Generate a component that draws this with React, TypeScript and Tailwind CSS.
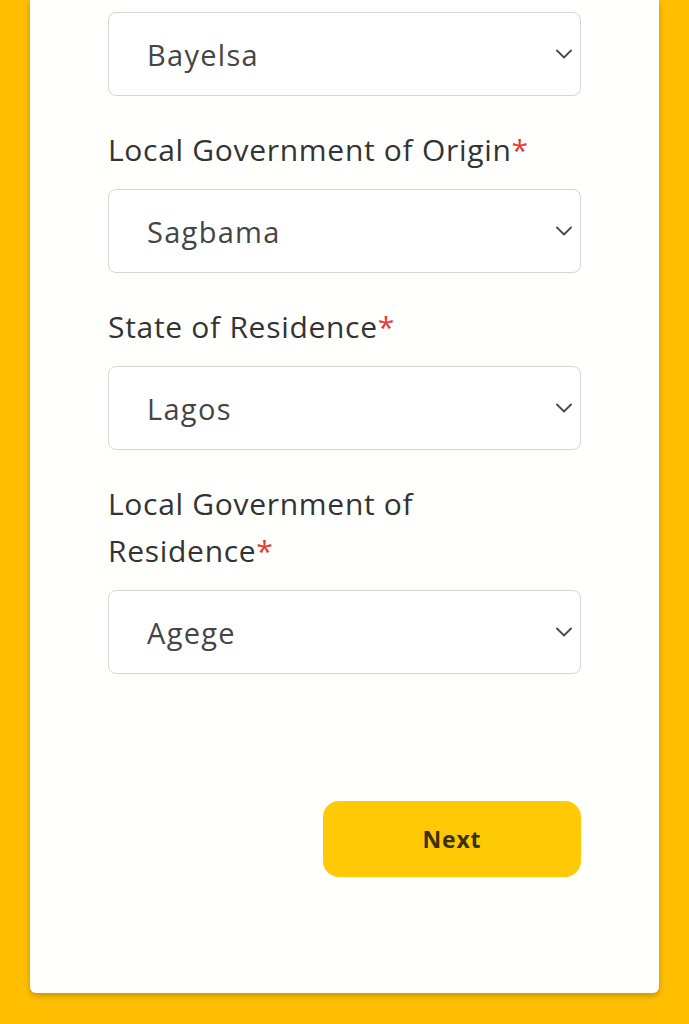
const fields = [
  { label: 'Local Government of Origin', value: 'Sagbama' },
  { label: 'State of Residence', value: 'Lagos' },
  { label: 'Local Government of Residence', value: 'Agege' },
];

function SelectBox({ value }: { value: string }) {
  return (
    <div className="flex h-[84px] items-center justify-between rounded-[8px] border-[1.5px] border-[#d6d6d6] bg-white pl-[38px] pr-[8px]">
      <span className="text-[29px] font-medium leading-none tracking-[1.3px] text-[#454545]">{value}</span>
      <svg width="16" height="10" viewBox="0 0 16 10" fill="none" className="text-[#4a4a4a]">
        <path d="M1 1.5l7 7 7-7" stroke="currentColor" strokeWidth="1.8" strokeLinecap="round" strokeLinejoin="round" />
      </svg>
    </div>
  );
}

export default function App() {
  return (
    <div
      className="min-h-screen bg-[#FFBF00] px-[30px] pb-[30px]"
      style={{ fontFamily: '"Open Sans", "Noto Sans", sans-serif' }}
    >
      <div className="rounded-b-[6px] bg-[#fffffd] px-[78px] pb-[116px] pt-[12px] shadow-[0_3px_6px_rgba(0,0,0,0.22)]">
        {/* State of origin (label scrolled away) */}
        <SelectBox value="Bayelsa" />

        {fields.map((field) => (
          <div key={field.label}>
            <label className="mb-[16px] mt-[30px] block text-[30px] leading-[47px] tracking-[0.7px] text-[#333333]">
              {field.label}
              <span className="text-[#e53935]">*</span>
            </label>
            <SelectBox value={field.value} />
          </div>
        ))}

        <div className="mt-[127px] flex justify-end">
          <button className="h-[76px] w-[258px] rounded-[16px] bg-[#FFCA05] text-[23px] font-bold tracking-[0.8px] text-[#3a3000]">
            Next
          </button>
        </div>
      </div>
    </div>
  );
}
